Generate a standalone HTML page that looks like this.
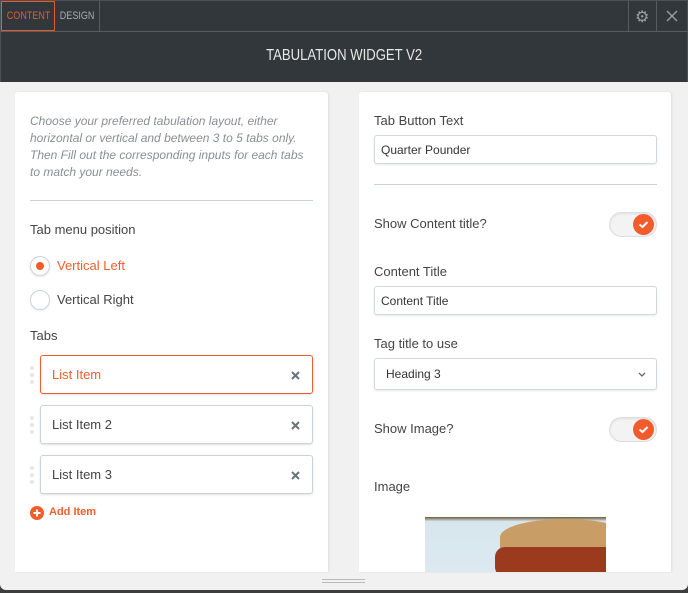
<!DOCTYPE html><html><head><style>
*{margin:0;padding:0;box-sizing:border-box}
body{width:688px;height:593px;background:#3a3f3d;font-family:"Liberation Sans",sans-serif;position:relative;overflow:hidden}
.a{position:absolute}
.t{font-size:13px;color:#444;white-space:nowrap}
.n{display:inline-block;transform:scaleX(.82);transform-origin:center}
.inp{position:absolute;background:#fff;border:1px solid #d3d8dc;border-radius:3px;box-shadow:0 1px 2px rgba(0,0,0,.08);font-size:12px;color:#333;padding-left:6px;display:flex;align-items:center}
.li{position:absolute;left:40px;width:273px;height:39px;background:#fff;border:1px solid #ccd3d8;border-radius:3px;box-shadow:0 1px 2px rgba(0,0,0,.12);font-size:13px;color:#444;padding-left:11px;display:flex;align-items:center}
.li svg{position:absolute;right:12px;top:15px}
.dots{position:absolute;left:30px;width:4px}
.dots i{display:block;width:4px;height:4px;border-radius:50%;background:#e6e6e6;margin-bottom:3px}
.tog{position:absolute;left:609px;width:48px;height:25px;border-radius:13px;background:#f3f3f3;border:1px solid #ddd;box-shadow:inset 0 1px 2px rgba(0,0,0,.08)}
.tog b{position:absolute;right:2px;top:1px;width:21px;height:21px;border-radius:50%;background:#f25c2d}
</style></head><body>
<div class="a" style="left:0;top:0;width:688px;height:82px;background:#31373a;border:1px solid #4a5255;border-bottom:none"></div>
<div class="a" style="left:0;top:31px;width:688px;height:1px;background:#555d60"></div>
<div class="a" style="left:1px;top:1px;width:54px;height:30px;border:1px solid #e85a2c;color:#e85a2c;font-size:11px;text-align:center;line-height:29px"><span class="n">CONTENT</span></div>
<div class="a" style="left:55px;top:1px;width:45px;height:30px;color:#a8adaf;font-size:11px;text-align:center;line-height:30px;border-right:1px solid #555d60"><span class="n">DESIGN</span></div>
<div class="a" style="left:628px;top:1px;width:1px;height:30px;background:#555d60"></div>
<div class="a" style="left:656px;top:1px;width:1px;height:30px;background:#555d60"></div>
<div class="a" style="left:635px;top:7px;color:#9aa0a3;font-size:16px">⚙</div>
<svg class="a" style="left:666px;top:10px" width="12" height="12"><path d="M1 1L11 11M11 1L1 11" stroke="#9aa0a3" stroke-width="1.3"/></svg>
<div class="a" style="left:0;top:47px;width:688px;text-align:center;color:#e8e8e8;font-size:16px"><span class="n">TABULATION WIDGET V2</span></div>
<div class="a" style="left:0;top:82px;width:688px;height:508px;background:#f1f1f1;border-radius:0 0 6px 6px"></div>
<div class="a" style="left:322px;top:579px;width:43px;height:1px;background:#bbb;box-shadow:0 3px 0 #bbb"></div>
<!-- left card -->
<div class="a" style="left:15px;top:92px;width:313px;height:480px;background:#fff;border-radius:3px 3px 0 0;box-shadow:1px 0 2px rgba(0,0,0,.08)"></div>
<div class="a" style="left:30px;top:113px;width:278px;font-size:12px;line-height:17px;color:#8a8f92;font-style:italic">Choose your preferred tabulation layout, either horizontal or vertical and between 3 to 5 tabs only. Then Fill out the corresponding inputs for each tabs to match your needs.</div>
<div class="a" style="left:30px;top:200px;width:283px;height:1px;background:#ccd3d8"></div>
<div class="a t" style="left:30px;top:222px">Tab menu position</div>
<div class="a" style="left:30px;top:256px;width:20px;height:20px;border-radius:50%;border:1px solid #ccd3d8;box-shadow:0 1px 2px rgba(0,0,0,.1)"><div style="width:8px;height:8px;border-radius:50%;background:#f25c2d;margin:5px"></div></div>
<div class="a t" style="left:57px;top:258px;color:#f25c2d">Vertical Left</div>
<div class="a" style="left:30px;top:290px;width:20px;height:20px;border-radius:50%;border:1px solid #ccd3d8;box-shadow:0 1px 2px rgba(0,0,0,.1)"></div>
<div class="a t" style="left:57px;top:292px">Vertical Right</div>
<div class="a t" style="left:30px;top:328px">Tabs</div>
<div class="dots" style="top:366px"><i></i><i></i><i></i></div>
<div class="li" style="top:355px;border-color:#f25c2d;color:#f25c2d">List Item<svg width="9" height="9"><path d="M1 1L8 8M8 1L1 8" stroke="#6a7378" stroke-width="2"/></svg></div>
<div class="dots" style="top:416px"><i></i><i></i><i></i></div>
<div class="li" style="top:405px">List Item 2<svg width="9" height="9"><path d="M1 1L8 8M8 1L1 8" stroke="#6a7378" stroke-width="2"/></svg></div>
<div class="dots" style="top:466px"><i></i><i></i><i></i></div>
<div class="li" style="top:455px">List Item 3<svg width="9" height="9"><path d="M1 1L8 8M8 1L1 8" stroke="#6a7378" stroke-width="2"/></svg></div>
<svg class="a" style="left:30px;top:506px" width="14" height="14"><circle cx="7" cy="7" r="7" fill="#f25c2d"/><path d="M7 3.5V10.5M3.5 7H10.5" stroke="#fff" stroke-width="2"/></svg>
<div class="a" style="left:49px;top:506px;font-size:11px;font-weight:bold;color:#f25c2d">Add Item</div>
<!-- right card -->
<div class="a" style="left:359px;top:92px;width:312px;height:480px;background:#fff;border-radius:3px 3px 0 0;box-shadow:1px 0 2px rgba(0,0,0,.08)"></div>
<div class="a t" style="left:374px;top:113px">Tab Button Text</div>
<div class="inp" style="left:374px;top:135px;width:283px;height:29px">Quarter Pounder</div>
<div class="a" style="left:374px;top:184px;width:283px;height:1px;background:#ccd3d8"></div>
<div class="a t" style="left:374px;top:216px">Show Content title?</div>
<div class="tog" style="top:212px"><b><svg width="21" height="21"><path d="M6.5 10.5L9.5 13L14.5 8" stroke="#fff" stroke-width="2" fill="none"/></svg></b></div>
<div class="a t" style="left:374px;top:264px">Content Title</div>
<div class="inp" style="left:374px;top:286px;width:283px;height:29px">Content Title</div>
<div class="a t" style="left:374px;top:336px">Tag title to use</div>
<div class="inp" style="left:374px;top:358px;width:283px;height:32px;padding-left:11px">Heading 3<svg style="position:absolute;right:10px;top:13px" width="8" height="6"><path d="M1 1L4 4L7 1" stroke="#666" stroke-width="1.3" fill="none"/></svg></div>
<div class="a t" style="left:374px;top:421px">Show Image?</div>
<div class="tog" style="top:417px"><b><svg width="21" height="21"><path d="M6.5 10.5L9.5 13L14.5 8" stroke="#fff" stroke-width="2" fill="none"/></svg></b></div>
<div class="a t" style="left:374px;top:479px">Image</div>
<div class="a" style="left:425px;top:517px;width:181px;height:55px;overflow:hidden;background:linear-gradient(180deg,#6b5a3a 0,#d7e6ee 8%,#dce9f0 100%)">
<div style="position:absolute;left:75px;top:2px;width:130px;height:36px;border-radius:50% 50% 8px 8px;background:#c99d66"></div>
<div style="position:absolute;left:70px;top:30px;width:130px;height:30px;background:#9c3a1e;border-radius:10px"></div>
</div>
</body></html>
